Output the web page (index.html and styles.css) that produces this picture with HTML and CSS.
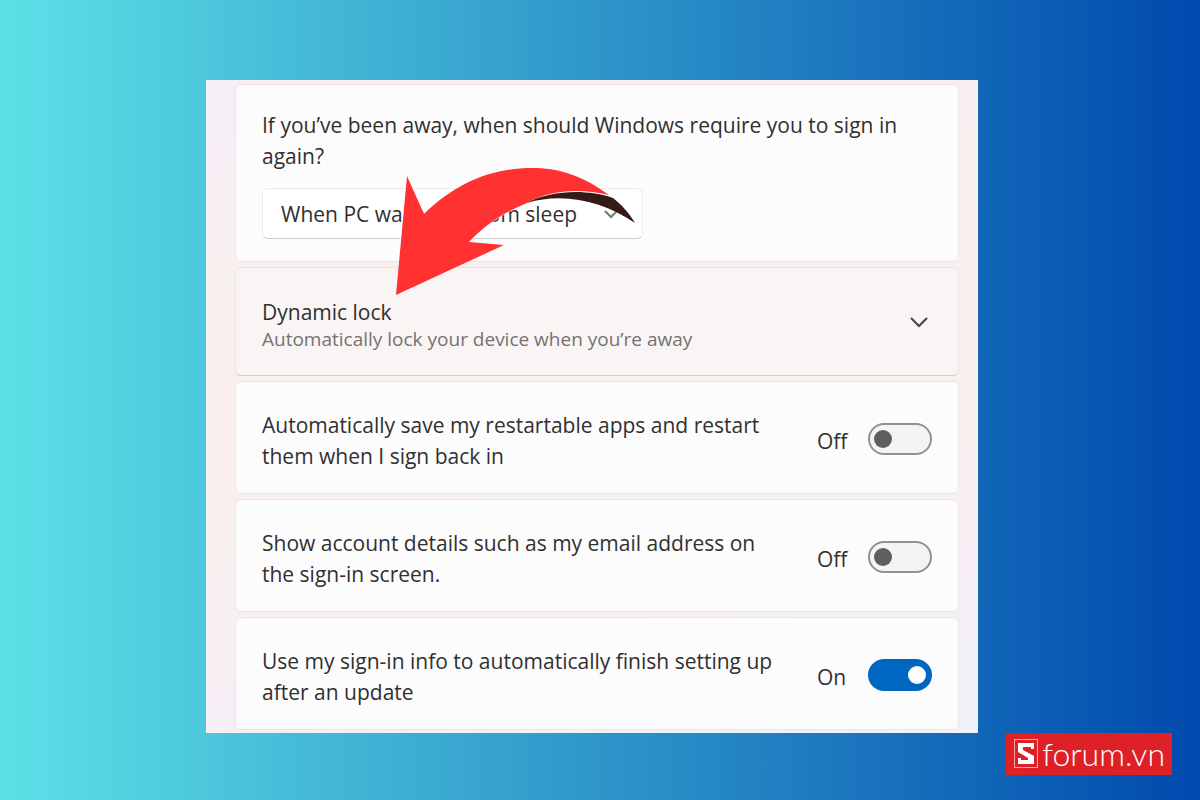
FILE: index.html
```html
<!DOCTYPE html>
<html lang="en">
<head>
  <meta charset="UTF-8">
  <meta name="viewport" content="width=device-width, initial-scale=1.0">
  <title>Sign-in options</title>
  <link rel="stylesheet" href="styles.css">
</head>
<body>
  <main class="panel">

    <!-- Require sign in -->
    <section class="card card-signin">
      <label class="card-text" for="signin">If you’ve been away, when should Windows require you to sign in again?</label>
      <div class="select-wrap">
        <select id="signin" class="select">
          <option>When PC wakes up from sleep</option>
          <option>Never</option>
        </select>
        <svg class="select-arrow" width="14" height="10" viewBox="0 0 14 10" aria-hidden="true">
          <path d="M1 2l6 6 6-6" fill="none" stroke="#777" stroke-width="2"/>
        </svg>
      </div>
      <!-- Arrow pointing at Dynamic lock -->
      <svg class="pointer" width="244" height="132" viewBox="394 166 244 132" aria-hidden="true">
        <path d="M407 176L424 214C456 183 491 168 533 168C562 168 586 178 609 195C579 188 550 190 527 203C504 212 484 226 469 242L504 245L396 295Z" fill="#ff3131" stroke="#fff" stroke-width="1" paint-order="stroke"/>
        <path d="M527 203C551 190 587 189 613 198C622 205 629 213 635 223C603 201 563 192 527 203Z" fill="#351b18"/>
      </svg>
    </section>

    <!-- Dynamic lock -->
    <button class="card card-lock" type="button" aria-expanded="false">
      <span class="lock-text">
        <span class="lock-title">Dynamic lock</span>
        <span class="lock-sub">Automatically lock your device when you’re away</span>
      </span>
      <svg class="lock-arrow" width="20" height="12" viewBox="0 0 20 12" aria-hidden="true">
        <path d="M2 2l8 8 8-8" fill="none" stroke="#444" stroke-width="2"/>
      </svg>
    </button>

    <!-- Toggles -->
    <section class="card card-row">
      <label class="card-text" for="restart">Automatically save my restartable apps and restart them when I sign back in</label>
      <span class="state">Off</span>
      <input class="toggle" type="checkbox" role="switch" id="restart">
    </section>

    <section class="card card-row">
      <label class="card-text" for="details">Show account details such as my email address on the sign-in screen.</label>
      <span class="state">Off</span>
      <input class="toggle" type="checkbox" role="switch" id="details">
    </section>

    <section class="card card-row">
      <label class="card-text" for="update">Use my sign-in info to automatically finish setting up after an update</label>
      <span class="state">On</span>
      <input class="toggle" type="checkbox" role="switch" id="update" checked>
    </section>
  </main>

  <a class="logo" href="#" aria-label="Sforum.vn">
    <svg width="24" height="29" viewBox="0 0 24 29" aria-hidden="true">
      <rect x="0.5" y="0.5" width="23" height="28" fill="none" stroke="#f7a3a5"/>
      <path d="M4 4h16v6h-3V8H9v3l11 6v8H4v-6h3v2h7v-2L4 13z" fill="#fff"/>
    </svg>
    <span>forum.vn</span>
  </a>

  <script>
    // Keep the On/Off text in step with its toggle
    document.querySelectorAll('.toggle').forEach((toggle) => {
      toggle.addEventListener('change', () => {
        toggle.previousElementSibling.textContent = toggle.checked ? 'On' : 'Off';
      });
    });
  </script>
</body>
</html>
```
FILE: styles.css
```css
* {
  box-sizing: border-box;
}
body {
  margin: 0;
  min-height: 100vh;
  display: flex;
  flex-direction: column;
  padding: 80px 28px 24px 206px;
  background: linear-gradient(90deg, #5ce1e6, #004aad);
  font-family: "Open Sans", "Noto Sans", sans-serif;
  font-size: 21px;
  line-height: 31px;
  color: #303030;
}
.panel {
  display: flex;
  flex-direction: column;
  gap: 5px;
  margin-right: 194px;
  padding: 4px 19px 3px 29px;
  background: linear-gradient(170deg, #f5eef8, #f8efef 25%, #f8f0ee 60%, #f6eef5 80%, #f0f2f8);
}
.card {
  border: 1px solid #eee4e6;
  border-radius: 6px;
  padding: 28px 26px 21px;
  background-color: #fdfcfd;
}
.card-signin {
  position: relative;
  padding: 25px 26px 22px;
}
.card-signin .card-text {
  display: block;
  margin-bottom: 16px;
}
.select-wrap {
  display: inline-grid;
  align-items: center;
  vertical-align: top;
  width: 381px;
  max-width: 100%;
}
.select {
  grid-area: 1 / 1;
  appearance: none;
  width: 100%;
  height: 51px;
  padding: 2px 18px 0;
  border: 1px solid #ececec;
  border-bottom-color: #ccc;
  border-radius: 6px;
  background-color: #fff;
  font: inherit;
  color: inherit;
}
.select-arrow {
  grid-area: 1 / 1;
  justify-self: end;
  margin-right: 25px;
  pointer-events: none;
}
.pointer {
  position: absolute;
  left: 158px;
  top: 81px;
  z-index: 1;
  pointer-events: none;
}
.card-lock {
  display: flex;
  align-items: center;
  justify-content: space-between;
  gap: 20px;
  padding: 31px 29px 22px 26px;
  border-bottom-color: #d2cccb;
  background-color: #f8f5f4;
  font: inherit;
  color: inherit;
  text-align: left;
}
.lock-title,
.lock-sub {
  display: block;
  line-height: 27px;
}
.lock-sub {
  font-size: 19px;
  color: #767272;
}
.lock-arrow {
  margin-bottom: 8px;
}
.card-row {
  display: flex;
  align-items: center;
}
.card-row .card-text {
  flex: 1;
  padding-right: 30px;
}
.state {
  width: 51px;
}
.toggle {
  appearance: none;
  flex: none;
  width: 64px;
  height: 32px;
  margin: 0 0 4px;
  padding: 5px 4px;
  border: 2px solid #929292;
  border-radius: 16px;
  background-color: #f5f4f5;
}
.toggle::before {
  content: "";
  display: block;
  width: 18px;
  height: 18px;
  border-radius: 50%;
  background-color: #5e5e5e;
}
.toggle:checked {
  border-color: #0067c0;
  background-color: #0067c0;
}
.toggle:checked::before {
  margin-left: auto;
  background-color: #fff;
}
.logo {
  display: flex;
  align-items: center;
  align-self: flex-end;
  gap: 4px;
  height: 42px;
  padding: 0 7px 1px 8px;
  background-color: #dd2127;
  color: #fff;
  font-family: Lato, sans-serif;
  font-size: 32px;
  font-weight: 300;
  text-decoration: none;
}
```
